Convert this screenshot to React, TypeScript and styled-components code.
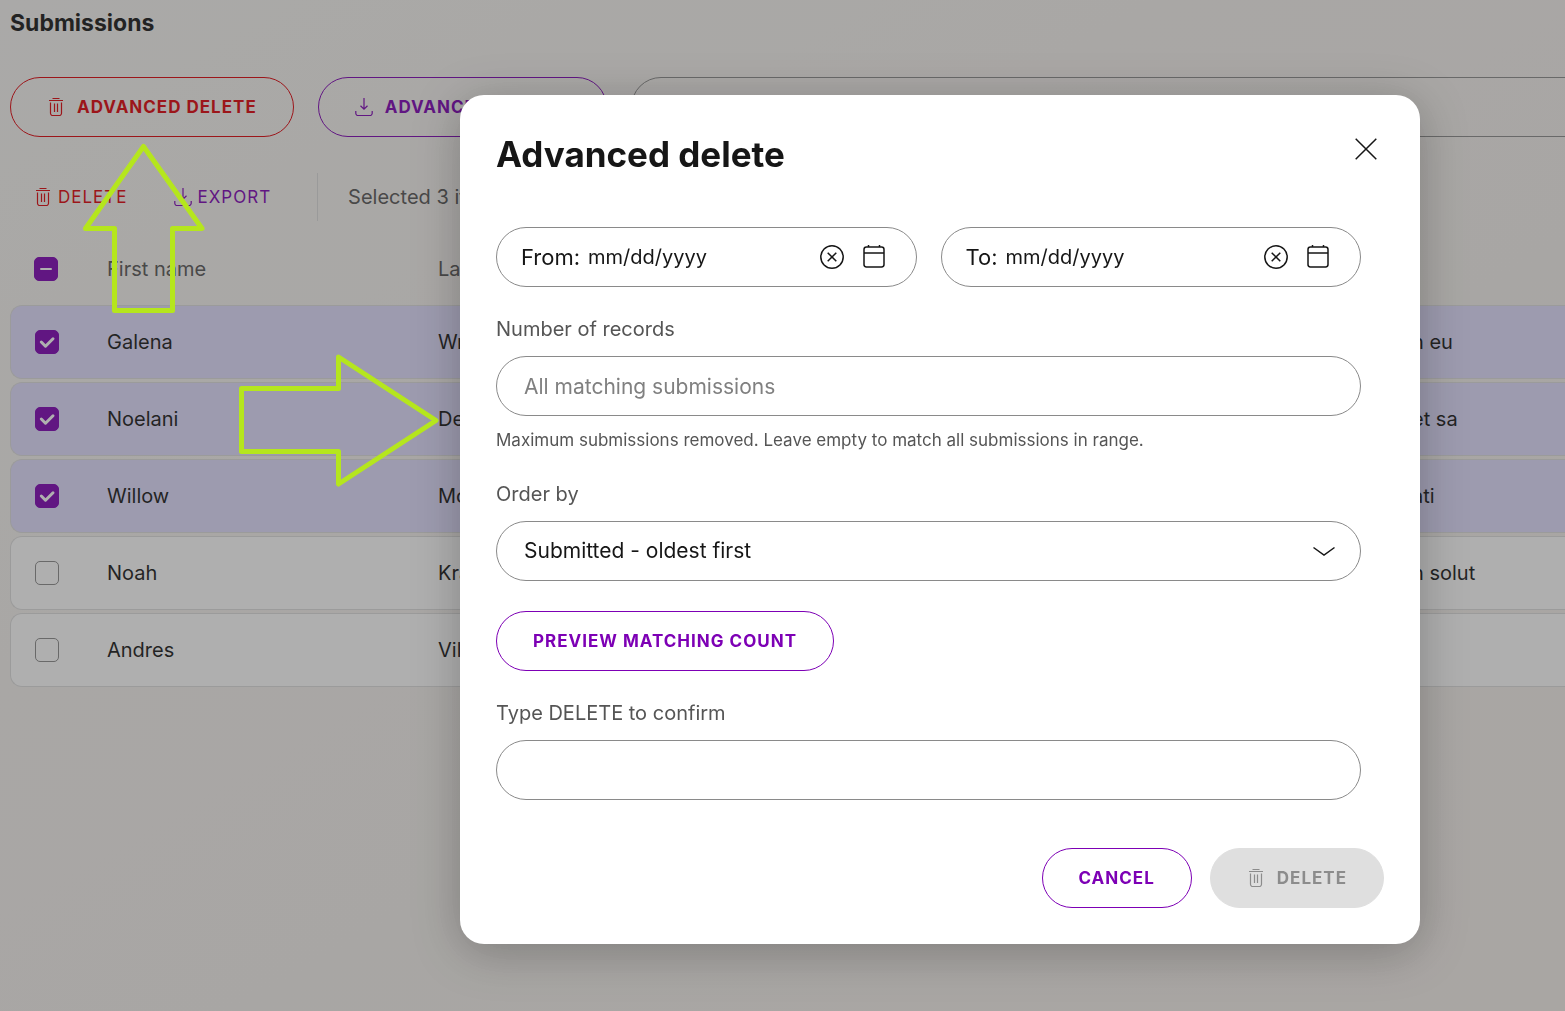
import React, { useEffect, useRef } from 'react';
import styled, { createGlobalStyle } from 'styled-components';

const color = {
  text: '#161616',
  muted: '#555555',
  purple: '#7d00b5',
  red: '#e00008',
  outline: '#8a8a8a',
  marker: '#b5e61d',
};

const GlobalStyle = createGlobalStyle`
  *, *::before, *::after { box-sizing: border-box; }
  body {
    margin: 0;
    overflow: hidden;
    color: ${color.text};
    background: linear-gradient(150deg, #f7f6f3 0%, #f6f2ef 35%, #f4f1ed 60%, #f6f0ec 100%);
    font-family: Inter, "Liberation Sans", sans-serif;
    font-size: 20px;
    line-height: 24px;
  }
  button, input, select { font: inherit; color: inherit; }
`;

const Page = styled.main`
  min-height: 100vh;
  padding: 8px 0 0 10px;
  overflow: hidden;
`;

const PageTitle = styled.h1`
  margin: 0 0 39px;
  font-size: 23px;
  line-height: 30px;
  font-weight: 700;
`;

const ActionBar = styled.div`
  display: flex;
  gap: 24px;
  margin-right: -40px;
`;

const PillButton = styled.button<{ $tone?: 'purple' | 'red' | 'muted' }>`
  display: inline-flex;
  align-items: center;
  justify-content: center;
  gap: 12px;
  height: 60px;
  padding: 0 36px;
  border: 1px solid ${({ $tone }) => ($tone === 'muted' ? '#dfdfdf' : $tone === 'red' ? color.red : color.purple)};
  border-radius: 30px;
  background: ${({ $tone }) => ($tone === 'muted' ? '#dfdfdf' : 'transparent')};
  color: ${({ $tone }) => ($tone === 'muted' ? '#8c8c8c' : $tone === 'red' ? color.red : color.purple)};
  font-size: 17px;
  font-weight: 700;
  letter-spacing: 1px;
  white-space: nowrap;
`;

const SearchInput = styled.input`
  flex: 1;
  height: 60px;
  padding: 0 28px;
  border: 1px solid ${color.outline};
  border-radius: 30px;
  background: transparent;
`;

const SelectionBar = styled.div`
  display: flex;
  align-items: center;
  height: 48px;
  margin: 36px 0 12px;
  padding-left: 24px;
  gap: 46px;
`;

const TextButton = styled.button<{ $tone: 'purple' | 'red' }>`
  display: inline-flex;
  align-items: center;
  gap: 6px;
  padding: 0;
  border: 0;
  background: none;
  color: ${({ $tone }) => ($tone === 'red' ? color.red : color.purple)};
  font-size: 17px;
  letter-spacing: 1px;
`;

const SelectedCount = styled.p`
  margin: 0;
  padding: 12px 0 12px 30px;
  border-left: 1px solid #dcdcdc;
  color: ${color.muted};
`;

const Table = styled.table`
  width: calc(100% + 40px);
  table-layout: fixed;
  border-collapse: separate;
  border-spacing: 0 3px;
  text-align: left;
`;

const Col = styled.col<{ $width?: number }>`
  width: ${({ $width }) => ($width ? `${$width}px` : 'auto')};
`;

const HeadCell = styled.th`
  height: 66px;
  padding: 0;
  color: ${color.muted};
  font-weight: 400;
  &:first-child { padding-left: 24px; }
`;

const Row = styled.tr<{ $selected: boolean }>`
  & > td {
    height: 74px;
    padding: 0;
    border: solid #dedede;
    border-width: 1px 0;
    background: ${({ $selected }) => ($selected ? '#e1deff' : '#ffffff')};
    white-space: nowrap;
    overflow: hidden;
  }
  & > td:first-child {
    padding-left: 24px;
    border-left-width: 1px;
    border-radius: 12px 0 0 12px;
  }
`;

const CheckFrame = styled.span`
  display: grid;
  width: 24px;
  height: 24px;
  & > * { grid-area: 1 / 1; }
  & > svg { pointer-events: none; }
`;

const CheckInput = styled.input`
  appearance: none;
  width: 24px;
  height: 24px;
  margin: 0;
  border: 1px solid ${color.outline};
  border-radius: 5px;
  background: #ffffff;
  &:checked, &:indeterminate {
    border-color: ${color.purple};
    background: ${color.purple};
  }
`;

const Scrim = styled.div`
  position: fixed;
  inset: 0;
  display: flex;
  align-items: flex-start;
  justify-content: flex-end;
  padding: 95px 145px 0 24px;
  background: rgba(55, 55, 55, 0.4);
`;

const Dialog = styled.form`
  width: 100%;
  max-width: 960px;
  padding: 36px;
  border-radius: 24px;
  background: #ffffff;
  box-shadow: 0 8px 48px rgba(0, 0, 0, 0.26);
`;

const DialogHeader = styled.header`
  display: flex;
  align-items: flex-start;
  justify-content: space-between;
  margin-bottom: 50px;
`;

const DialogTitle = styled.h2`
  margin: 0;
  font-size: 35px;
  line-height: 46px;
  font-weight: 700;
`;

const IconButton = styled.button<{ $size: number }>`
  display: grid;
  place-items: center;
  flex: none;
  width: ${({ $size }) => $size}px;
  height: ${({ $size }) => $size}px;
  padding: 0;
  border: 0;
  background: none;
`;

const DialogBody = styled.div`
  display: flex;
  flex-direction: column;
  align-items: stretch;
  gap: 30px;
  padding-right: 23px;
`;

const DateRange = styled.div`
  display: grid;
  grid-template-columns: repeat(2, minmax(0, 1fr));
  gap: 24px;
`;

const DateField = styled.div`
  display: flex;
  align-items: center;
  gap: 18px;
  height: 60px;
  padding: 0 30px 0 24px;
  border: 1px solid ${color.outline};
  border-radius: 30px;
`;

const DateEntry = styled.div`
  display: flex;
  flex: 1;
  min-width: 0;
  align-items: center;
  gap: 8px;
`;

const DateLabel = styled.label`
  flex: none;
  font-size: 22px;
`;

const DateInput = styled.input`
  flex: 1;
  min-width: 0;
  padding: 0;
  border: 0;
  outline: 0;
  background: none;
  font-size: 20px;
  &::placeholder { color: ${color.text}; opacity: 1; }
`;

const Field = styled.div`
  display: flex;
  flex-direction: column;
`;

const FieldLabel = styled.label`
  margin-bottom: 15px;
  color: ${color.muted};
`;

const TextInput = styled.input`
  width: 100%;
  height: 60px;
  padding: 0 27px;
  border: 1px solid ${color.outline};
  border-radius: 30px;
  background: #ffffff;
  font-size: 21px;
  &::placeholder { color: #808080; opacity: 1; }
`;

const Hint = styled.p`
  margin: 12px 0 0;
  color: ${color.muted};
  font-size: 17px;
`;

const SelectFrame = styled.div`
  display: grid;
  align-items: center;
  & > * { grid-area: 1 / 1; }
  & > svg {
    justify-self: end;
    margin-right: 25px;
    pointer-events: none;
  }
`;

const Select = styled.select`
  appearance: none;
  width: 100%;
  height: 60px;
  padding: 0 60px 0 27px;
  border: 1px solid ${color.outline};
  border-radius: 30px;
  background: #ffffff;
  font-size: 21px;
`;

const BodyAction = styled.div`
  display: flex;
`;

const DialogFooter = styled.footer`
  display: flex;
  justify-content: flex-end;
  gap: 18px;
  margin-top: 48px;
`;

const Annotations = styled.svg`
  position: fixed;
  top: 0;
  left: 0;
  pointer-events: none;
`;

const TrashIcon = () => (
  <svg width="18" height="20" viewBox="0 0 18 20" fill="none" stroke="currentColor" strokeWidth="1.2" aria-hidden="true">
    <path d="M5.5 1.5h7M2 3.500h14M3.500 5.500v10.700a2.300 2.300 0 0 0 2.300 2.300h6.400a2.300 2.300 0 0 0 2.300-2.300V5.500M7.500 6.500v8.500M10.500 6.500v8.500" />
  </svg>
);

const DownloadIcon = () => (
  <svg width="18" height="20" viewBox="0 0 18 20" fill="none" stroke="currentColor" strokeWidth="1.2" aria-hidden="true">
    <path d="M9 1v11M5.500 8.800L9 12.200l3.500-3.400M.8 14v2.200a2.300 2.300 0 0 0 2.300 2.300h11.800a2.300 2.300 0 0 0 2.300-2.300V14" />
  </svg>
);

const CloseIcon = () => (
  <svg width="22" height="22" viewBox="0 0 22 22" fill="none" stroke="currentColor" strokeWidth="1.5" aria-hidden="true">
    <path d="M.7.7l20.6 20.6M21.3.7L.7 21.3" />
  </svg>
);

const ClearIcon = () => (
  <svg width="24" height="24" viewBox="0 0 24 24" fill="none" stroke="currentColor" strokeWidth="1.5" aria-hidden="true">
    <circle cx="12" cy="12" r="11.2" />
    <path d="M7.700 7.700l8.600 8.600M16.300 7.700l-8.600 8.600" />
  </svg>
);

const CalendarIcon = () => (
  <svg width="24" height="24" viewBox="0 0 24 24" fill="none" stroke="currentColor" strokeWidth="1.5" aria-hidden="true">
    <rect x="2" y="2" width="20" height="20" rx="2.400" />
    <path d="M2 8h20M6.500 0v2M17.500 0v2" />
  </svg>
);

const ChevronIcon = () => (
  <svg width="24" height="12" viewBox="0 0 24 12" fill="none" stroke="currentColor" strokeWidth="1.5" aria-hidden="true">
    <path d="M1.500 2.500l10.500 7.600L22.500 2.500" />
  </svg>
);

interface CheckboxProps {
  label: string;
  checked?: boolean;
  mixed?: boolean;
}

function Checkbox({ label, checked = false, mixed = false }: CheckboxProps) {
  const ref = useRef<HTMLInputElement>(null);
  useEffect(() => {
    if (ref.current) ref.current.indeterminate = mixed;
  }, [mixed]);
  return (
    <CheckFrame>
      <CheckInput ref={ref} type="checkbox" aria-label={label} defaultChecked={checked} />
      {(checked || mixed) && (
        <svg width="24" height="24" viewBox="0 0 24 24" fill="none" stroke="#ffffff" strokeLinecap="round" strokeLinejoin="round">
          {mixed ? <path d="M7 12h10" strokeWidth="2" /> : <path d="M6.300 12l4.200 4.200 7.500-7.400" strokeWidth="3" />}
        </svg>
      )}
    </CheckFrame>
  );
}

const submissions = [
  { first: 'Galena', last: 'Wright', note: 'n eu', selected: true },
  { first: 'Noelani', last: 'Decker', note: 'et sa', selected: true },
  { first: 'Willow', last: 'Morse', note: 'ati', selected: true },
  { first: 'Noah', last: 'Kramer', note: 'n solut', selected: false },
  { first: 'Andres', last: 'Villa', note: '', selected: false },
];

function DatePicker({ id, label }: { id: string; label: string }) {
  return (
    <DateField>
      <DateEntry>
        <DateLabel htmlFor={id}>{label}</DateLabel>
        <DateInput id={id} type="text" placeholder="mm/dd/yyyy" />
      </DateEntry>
      <IconButton type="button" $size={24} aria-label="Clear date"><ClearIcon /></IconButton>
      <IconButton type="button" $size={24} aria-label="Open calendar"><CalendarIcon /></IconButton>
    </DateField>
  );
}

export default function App() {
  return (
    <>
      <GlobalStyle />
      <Page>
        <PageTitle>Submissions</PageTitle>
        <ActionBar>
          <PillButton type="button" $tone="red"><TrashIcon />ADVANCED DELETE</PillButton>
          <PillButton type="button"><DownloadIcon />ADVANCED EXPORT</PillButton>
          <SearchInput type="search" aria-label="Search submissions" />
        </ActionBar>
        <SelectionBar>
          <TextButton type="button" $tone="red"><TrashIcon />DELETE</TextButton>
          <TextButton type="button" $tone="purple"><DownloadIcon />EXPORT</TextButton>
          <SelectedCount>Selected 3 items</SelectedCount>
        </SelectionBar>
        <Table>
          <colgroup>
            <Col $width={97} />
            <Col $width={331} />
            <Col $width={974} />
            <Col />
          </colgroup>
          <thead>
            <tr>
              <HeadCell scope="col"><Checkbox label="Select all" mixed /></HeadCell>
              <HeadCell scope="col">First name</HeadCell>
              <HeadCell scope="col">Last name</HeadCell>
              <HeadCell />
            </tr>
          </thead>
          <tbody>
            {submissions.map((s) => (
              <Row key={s.first} $selected={s.selected}>
                <td><Checkbox label={`Select ${s.first}`} checked={s.selected} /></td>
                <td>{s.first}</td>
                <td>{s.last}</td>
                <td>{s.note}</td>
              </Row>
            ))}
          </tbody>
        </Table>
      </Page>

      <Scrim>
        <Dialog role="dialog" aria-modal="true" aria-labelledby="dialog-title">
          <DialogHeader>
            <DialogTitle id="dialog-title">Advanced delete</DialogTitle>
            <IconButton type="button" $size={36} aria-label="Close"><CloseIcon /></IconButton>
          </DialogHeader>
          <DialogBody>
            <DateRange>
              <DatePicker id="from" label="From:" />
              <DatePicker id="to" label="To:" />
            </DateRange>
            <Field>
              <FieldLabel htmlFor="records">Number of records</FieldLabel>
              <TextInput id="records" type="text" placeholder="All matching submissions" />
              <Hint>Maximum submissions removed. Leave empty to match all submissions in range.</Hint>
            </Field>
            <Field>
              <FieldLabel htmlFor="order">Order by</FieldLabel>
              <SelectFrame>
                <Select id="order" defaultValue="oldest">
                  <option value="oldest">Submitted - oldest first</option>
                </Select>
                <ChevronIcon />
              </SelectFrame>
            </Field>
            <BodyAction>
              <PillButton type="button">PREVIEW MATCHING COUNT</PillButton>
            </BodyAction>
            <Field>
              <FieldLabel htmlFor="confirm">Type DELETE to confirm</FieldLabel>
              <TextInput id="confirm" type="text" />
            </Field>
          </DialogBody>
          <DialogFooter>
            <PillButton type="button">CANCEL</PillButton>
            <PillButton type="submit" $tone="muted" disabled><TrashIcon />DELETE</PillButton>
          </DialogFooter>
        </Dialog>
      </Scrim>

      <Annotations width="480" height="500" fill="none" stroke={color.marker} strokeWidth="5" strokeLinejoin="round" aria-hidden="true">
        <path d="M143.500 146.500L202 228.500H172.500V310.500H114.500V228.500H85.500Z" />
        <path d="M241.500 388.500H338.500V357L436 420.500L338.500 484V451.500H241.500Z" />
      </Annotations>
    </>
  );
}
